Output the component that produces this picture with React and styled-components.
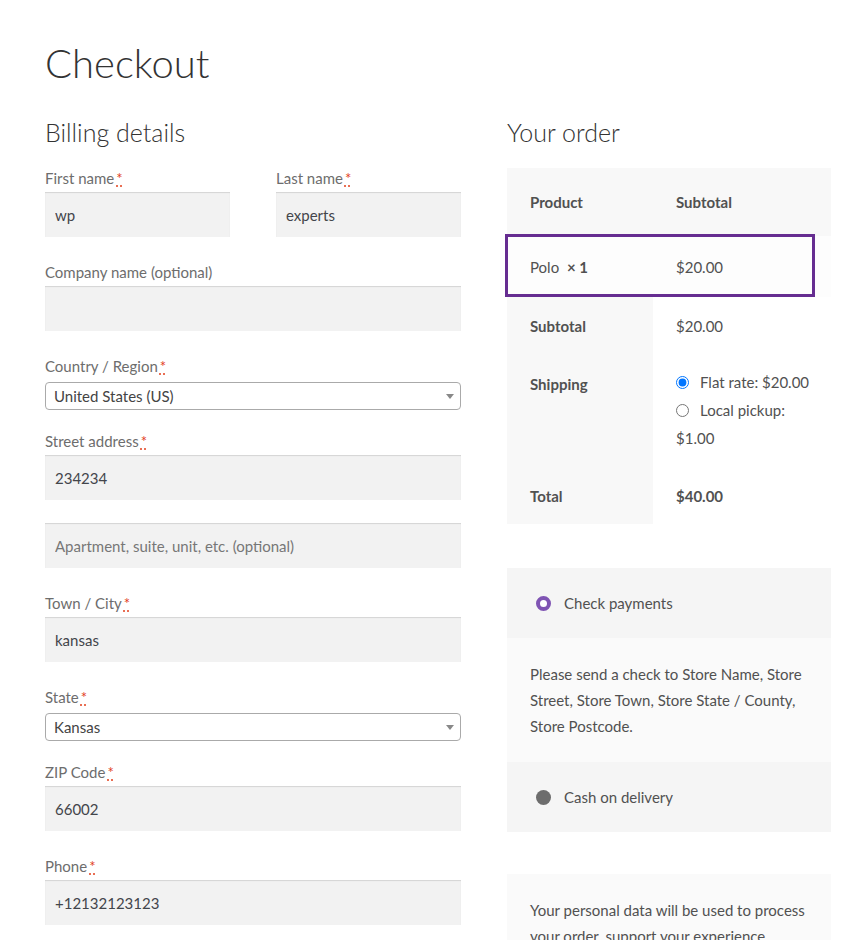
import React from "react"
import styled, { createGlobalStyle } from "styled-components"

const GlobalStyle = createGlobalStyle`
  body {
    margin: 0;
    background: #fff;
    font-family: Lato, "Noto Sans", sans-serif;
    font-size: 15px;
    color: #515151;
  }
  * { box-sizing: border-box; }
`

const Page = styled.div`
  padding: 36px 27px 0 45px;
  width: 858px;
  height: 940px;
  overflow: hidden;
`

const Title = styled.h1`
  margin: 0 0 26px;
  font-size: 40px;
  font-weight: 300;
  line-height: 54px;
  color: #333;
`

const Columns = styled.div`
  display: flex;
  gap: 46px;
`

const Column = styled.div`
  width: ${(p) => p.w}px;
  flex-shrink: 0;
`

const Heading = styled.h3`
  margin: 0 0 20px;
  font-size: 25px;
  font-weight: 300;
  line-height: 32px;
  color: #333;
`

const Pair = styled.div`
  display: flex;
  justify-content: space-between;
`

const Field = styled.div`
  width: ${(p) => (p.half ? "185px" : "100%")};
  margin-bottom: ${(p) => p.mb ?? 25}px;
`

const Label = styled.label`
  display: block;
  line-height: 20px;
  margin-bottom: ${(p) => (p.select ? 6 : 4)}px;
  color: #6d6d6d;
`

const Req = styled.abbr`
  color: #e2401c;
  text-decoration: underline dotted #e2401c;
  text-underline-offset: 2px;
  margin-left: 2px;
`

const Input = styled.input`
  display: block;
  width: 100%;
  height: 45px;
  border: 0;
  padding: 0 10px;
  background: #f2f2f2;
  box-shadow: inset 0 1px 1px rgba(0, 0, 0, 0.125);
  font: inherit;
  color: #43454b;
  outline: none;
  &::placeholder {
    color: #777;
  }
`

const SelectBox = styled.div`
  position: relative;
  height: 28px;
  border: 1px solid #aaa;
  border-radius: 4px;
  padding: 0 20px 0 8px;
  line-height: 26px;
  color: #444;
  &::after {
    content: "";
    position: absolute;
    right: 6px;
    top: 11px;
    border-style: solid;
    border-width: 5px 4px 0 4px;
    border-color: #888 transparent transparent transparent;
  }
`

const OrderTable = styled.div`
  line-height: 20px;
`

const Row = styled.div`
  display: flex;
  position: relative;
  background: ${(p) => p.bg || "#fff"};
`

const Cell = styled.div`
  flex: ${(p) => (p.head ? "0 0 146px" : "1")};
  padding: ${(p) => p.pad || "19px 23px"};
  background: ${(p) => p.bg || "transparent"};
  font-weight: ${(p) => (p.bold ? 700 : 400)};
`

const Highlight = styled.div`
  position: absolute;
  left: -2px;
  top: -2px;
  width: 310px;
  bottom: 0;
  border: 3px solid #662d91;
  pointer-events: none;
`

const ShipList = styled.ul`
  list-style: none;
  margin: 0;
  padding: 0;
  line-height: 28px;
  li {
    margin: 0;
  }
  input {
    margin: 0 11px 0 0;
    width: 13px;
    height: 13px;
    vertical-align: -1px;
  }
`

const Qty = styled.strong`
  margin-left: 4px;
  font-weight: 700;
`

const Payment = styled.div`
  margin-top: 44px;
`

const Method = styled.div`
  display: flex;
  align-items: center;
  height: 70px;
  padding-left: 29px;
  background: #f5f5f5;
  gap: 13px;
`

const Dot = styled.span`
  width: 15px;
  height: 15px;
  border-radius: 50%;
  background: ${(p) => (p.on ? "#fff" : "#6d6d6d")};
  border: ${(p) => (p.on ? "4px solid #7f54b3" : "0")};
`

const Box = styled.div`
  padding: 23px 23px;
  background: #fafafa;
  line-height: 26px;
  margin-top: ${(p) => p.mt || 0}px;
`

export default function App() {
  return (
    <Page>
      <GlobalStyle />
      <Title>Checkout</Title>
      <Columns>
        <Column w={416}>
          <Heading>Billing details</Heading>
          <Pair>
            <Field half>
              <Label>
                First name<Req title="required">*</Req>
              </Label>
              <Input defaultValue="wp" />
            </Field>
            <Field half>
              <Label>
                Last name<Req title="required">*</Req>
              </Label>
              <Input defaultValue="experts" />
            </Field>
          </Pair>
          <Field>
            <Label>Company name (optional)</Label>
            <Input />
          </Field>
          <Field mb={21}>
            <Label select>
              Country / Region<Req title="required">*</Req>
            </Label>
            <SelectBox>United States (US)</SelectBox>
          </Field>
          <Field mb={23}>
            <Label>
              Street address<Req title="required">*</Req>
            </Label>
            <Input defaultValue="234234" />
          </Field>
          <Field>
            <Input placeholder="Apartment, suite, unit, etc. (optional)" />
          </Field>
          <Field>
            <Label>
              Town / City<Req title="required">*</Req>
            </Label>
            <Input defaultValue="kansas" />
          </Field>
          <Field mb={21}>
            <Label select>
              State<Req title="required">*</Req>
            </Label>
            <SelectBox>Kansas</SelectBox>
          </Field>
          <Field>
            <Label>
              ZIP Code<Req title="required">*</Req>
            </Label>
            <Input defaultValue="66002" />
          </Field>
          <Field>
            <Label>
              Phone<Req title="required">*</Req>
            </Label>
            <Input defaultValue="+12132123123" />
          </Field>
        </Column>

        <Column w={324}>
          <Heading>Your order</Heading>
          <OrderTable>
            <Row bg="#f8f8f8">
              <Cell head bold pad="24px 23px">Product</Cell>
              <Cell bold pad="24px 23px">Subtotal</Cell>
            </Row>
            <Row bg="#fdfdfd">
              <Cell head pad="21px 23px 20px">
                Polo <Qty>× 1</Qty>
              </Cell>
              <Cell pad="21px 23px 20px">$20.00</Cell>
              <Highlight />
            </Row>
            <Row>
              <Cell head bg="#f8f8f8" bold pad="19px 23px">Subtotal</Cell>
              <Cell pad="19px 23px">$20.00</Cell>
            </Row>
            <Row>
              <Cell head bg="#f8f8f8" bold pad="19px 23px">Shipping</Cell>
              <Cell pad="13px 8px 15px 23px">
                <ShipList>
                  <li>
                    <input type="radio" name="ship" defaultChecked />
                    Flat rate: $20.00
                  </li>
                  <li>
                    <input type="radio" name="ship" />
                    Local pickup: $1.00
                  </li>
                </ShipList>
              </Cell>
            </Row>
            <Row>
              <Cell head bg="#f8f8f8" bold pad="19px 23px 18px">Total</Cell>
              <Cell bold pad="19px 23px 18px">$40.00</Cell>
            </Row>
          </OrderTable>

          <Payment>
            <Method>
              <Dot on />
              Check payments
            </Method>
            <Box>
              Please send a check to Store Name, Store Street, Store Town, Store
              State / County, Store Postcode.
            </Box>
            <Method>
              <Dot />
              Cash on delivery
            </Method>
          </Payment>

          <Box mt={42}>
            Your personal data will be used to process your order, support your
            experience throughout this website, and for other purposes described
            in our privacy policy.
          </Box>
        </Column>
      </Columns>
    </Page>
  )
}
